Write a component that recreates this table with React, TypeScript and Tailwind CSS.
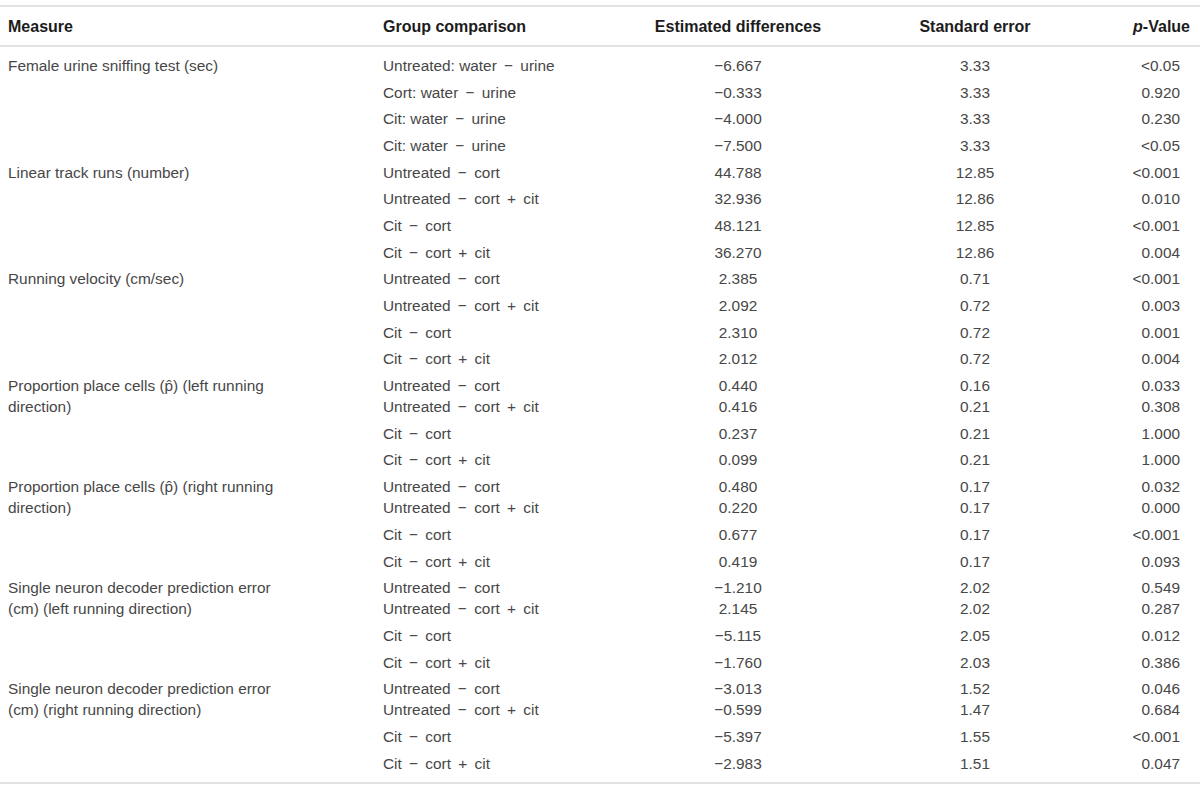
type Row = { measure: string[]; cells: string[][] }

const M = '\u2212'

const rows: Row[] = [
  { measure: ['Female urine sniffing test (sec)'], cells: [[`Untreated: water ${M} urine`], [`${M}6.667`], ['3.33'], ['<0.05']] },
  { measure: [], cells: [[`Cort: water ${M} urine`], [`${M}0.333`], ['3.33'], ['0.920']] },
  { measure: [], cells: [[`Cit: water ${M} urine`], [`${M}4.000`], ['3.33'], ['0.230']] },
  { measure: [], cells: [[`Cit: water ${M} urine`], [`${M}7.500`], ['3.33'], ['<0.05']] },

  { measure: ['Linear track runs (number)'], cells: [[`Untreated ${M} cort`], ['44.788'], ['12.85'], ['<0.001']] },
  { measure: [], cells: [[`Untreated ${M} cort + cit`], ['32.936'], ['12.86'], ['0.010']] },
  { measure: [], cells: [[`Cit ${M} cort`], ['48.121'], ['12.85'], ['<0.001']] },
  { measure: [], cells: [[`Cit ${M} cort + cit`], ['36.270'], ['12.86'], ['0.004']] },

  { measure: ['Running velocity (cm/sec)'], cells: [[`Untreated ${M} cort`], ['2.385'], ['0.71'], ['<0.001']] },
  { measure: [], cells: [[`Untreated ${M} cort + cit`], ['2.092'], ['0.72'], ['0.003']] },
  { measure: [], cells: [[`Cit ${M} cort`], ['2.310'], ['0.72'], ['0.001']] },
  { measure: [], cells: [[`Cit ${M} cort + cit`], ['2.012'], ['0.72'], ['0.004']] },

  {
    measure: ['Proportion place cells (p\u0302) (left running', 'direction)'],
    cells: [[`Untreated ${M} cort`, `Untreated ${M} cort + cit`], ['0.440', '0.416'], ['0.16', '0.21'], ['0.033', '0.308']],
  },
  { measure: [], cells: [[`Cit ${M} cort`], ['0.237'], ['0.21'], ['1.000']] },
  { measure: [], cells: [[`Cit ${M} cort + cit`], ['0.099'], ['0.21'], ['1.000']] },

  {
    measure: ['Proportion place cells (p\u0302) (right running', 'direction)'],
    cells: [[`Untreated ${M} cort`, `Untreated ${M} cort + cit`], ['0.480', '0.220'], ['0.17', '0.17'], ['0.032', '0.000']],
  },
  { measure: [], cells: [[`Cit ${M} cort`], ['0.677'], ['0.17'], ['<0.001']] },
  { measure: [], cells: [[`Cit ${M} cort + cit`], ['0.419'], ['0.17'], ['0.093']] },

  {
    measure: ['Single neuron decoder prediction error', '(cm) (left running direction)'],
    cells: [[`Untreated ${M} cort`, `Untreated ${M} cort + cit`], [`${M}1.210`, '2.145'], ['2.02', '2.02'], ['0.549', '0.287']],
  },
  { measure: [], cells: [[`Cit ${M} cort`], [`${M}5.115`], ['2.05'], ['0.012']] },
  { measure: [], cells: [[`Cit ${M} cort + cit`], [`${M}1.760`], ['2.03'], ['0.386']] },

  {
    measure: ['Single neuron decoder prediction error', '(cm) (right running direction)'],
    cells: [[`Untreated ${M} cort`, `Untreated ${M} cort + cit`], [`${M}3.013`, `${M}0.599`], ['1.52', '1.47'], ['0.046', '0.684']],
  },
  { measure: [], cells: [[`Cit ${M} cort`], [`${M}5.397`], ['1.55'], ['<0.001']] },
  { measure: [], cells: [[`Cit ${M} cort + cit`], [`${M}2.983`], ['1.51'], ['0.047']] },
]

const grid = 'grid grid-cols-[375px_265px_196px_278px_86px]'

// operators between words get a little extra room, as in the typeset original
function withOps(s: string) {
  return s.split(/( [\u2212+] )/).map((part, i) =>
    i % 2 === 1 ? <span key={i} className="mx-[3px]">{part}</span> : part
  )
}

function Lines({ lines }: { lines: string[] }) {
  return (
    <>
      {lines.map((l, i) => (
        <div key={i} className="whitespace-pre">{withOps(l)}</div>
      ))}
    </>
  )
}

export default function App() {
  return (
    <div className="w-[1200px] h-[790px] bg-white font-['Liberation_Sans',Arial,sans-serif] text-[15.4px]">
      <div className="pt-[5px]">
        <div className={`${grid} h-[42px] items-center border-y-2 border-[#e2e2e2] text-[16px] font-bold text-[#1c1c1c]`}>
          <div className="pl-2 pt-[2px]">Measure</div>
          <div className="pl-2 pt-[2px]">Group comparison</div>
          <div className="text-center pt-[2px]">Estimated differences</div>
          <div className="text-center pt-[2px]">Standard error</div>
          <div className="pr-[10px] text-right pt-[2px]"><span className="italic">p</span>-Value</div>
        </div>

        <div className="pt-[5px] pb-[5px] border-b-2 border-[#e2e2e2] text-[#474747] leading-[21px]">
          {rows.map((r, i) => (
            <div key={i} className={`${grid} py-[2.85px]`}>
              <div className="pl-2"><Lines lines={r.measure} /></div>
              <div className="pl-2"><Lines lines={r.cells[0]} /></div>
              <div className="text-center"><Lines lines={r.cells[1]} /></div>
              <div className="text-center"><Lines lines={r.cells[2]} /></div>
              <div className="pr-[20px] text-right"><Lines lines={r.cells[3]} /></div>
            </div>
          ))}
        </div>
      </div>
    </div>
  )
}
